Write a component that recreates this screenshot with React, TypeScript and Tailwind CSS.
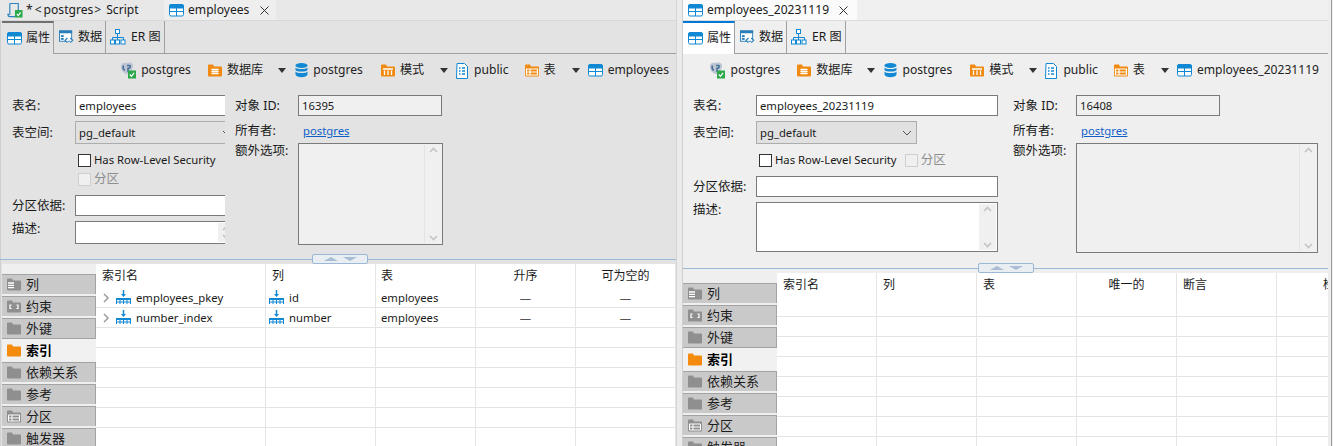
import React from "react";

const TableIcon = () => (
  <svg width="15" height="13" viewBox="0 0 15 13" className="shrink-0">
    <rect x="0.5" y="0.5" width="14" height="11.5" rx="1.5" fill="#fff" stroke="#1088d4" />
    <rect x="0.5" y="0.5" width="14" height="4" rx="1" fill="#1088d4" />
    <path d="M7.5 4v8M0.5 7.5h14" stroke="#1088d4" />
  </svg>
);

const DataIcon = () => (
  <svg width="15" height="15" viewBox="0 0 16 15" className="shrink-0">
    <rect x="0.5" y="0.5" width="13" height="11" fill="#fff" stroke="#2a7fb8" />
    <rect x="0" y="0" width="14" height="3" fill="#2a7fb8" />
    <rect x="2" y="5" width="3" height="2" fill="#2a7fb8" />
    <rect x="2" y="8" width="3" height="2" fill="#2a7fb8" />
    <path d="M9 8l-2.5 2.500L9 13M12 8l2.500 2.500L12 13" fill="#fff" stroke="#2a7fb8" strokeWidth="1.300" />
  </svg>
);

const ErIcon = () => (
  <svg width="16" height="16" viewBox="0 0 16 16" className="shrink-0">
    <rect x="5.500" y="0.500" width="4" height="4" fill="#fff" stroke="#1088d4" />
    <path d="M7.500 5v3M2.500 11V8.500h11V11M7.500 8.500V11" fill="none" stroke="#1088d4" />
    <rect x="0.500" y="11" width="4" height="4" fill="#fff" stroke="#1088d4" />
    <rect x="5.500" y="11" width="4" height="4" fill="#fff" stroke="#1088d4" />
    <rect x="11" y="11" width="4" height="4" fill="#fff" stroke="#1088d4" />
  </svg>
);

const ScriptIcon = () => (
  <svg width="16" height="17" viewBox="0 0 17 17" className="shrink-0">
    <path d="M3 1h9v11M3 1v11.500H1c0 2 1 2.500 2 2.500h6" fill="none" stroke="#2a83bd" strokeWidth="1.200" />
    <rect x="8.500" y="8" width="8" height="8" fill="#2ba84a" />
    <path d="M10.500 12l1.500 1.800 2.500-3.300" fill="none" stroke="#fff" strokeWidth="1.200" />
  </svg>
);

const PgIcon = () => (
  <svg width="16" height="17" viewBox="0 0 16 17" className="shrink-0">
    <path d="M1 4c0-3 3-3.500 5-3 2-1 6-1 7 1.500 .5 2-.5 4-1.500 5.500L10 12H6L3 10C1.500 8.500 1 6 1 4z" fill="#bcc5d1" />
    <path d="M3.500 3.500c-.8 1.800 0 4 1.200 5M7 3.500h2.500c1.500 0 1 3-1.500 2.800V10" fill="none" stroke="#46709c" strokeWidth="1.500" />
    <rect x="8" y="8.500" width="8" height="8" fill="#2ba84a" />
    <path d="M9.800 12.500l1.700 1.800 2.600-3.400" fill="none" stroke="#fff" strokeWidth="1.200" />
  </svg>
);

const CloseX = ({ className }: { className: string }) => (
  <svg width="9" height="9" viewBox="0 0 9 9" className={`shrink-0 ${className}`}>
    <path d="M.5 .5l8 8M8.500 .5l-8 8" stroke="#333" />
  </svg>
);

type Glyph = "plain" | "lines" | "bracket" | "table" | "db" | "grid" | "list";

const Folder = ({ color, glyph = "plain" }: { color: string; glyph?: Glyph }) => (
  <svg width="14" height="13" viewBox="0 0 14 12" className="shrink-0">
    <path d="M0 1a1 1 0 0 1 1-1h4l1 2h7a1 1 0 0 1 1 1v8a1 1 0 0 1-1 1H1a1 1 0 0 1-1-1z" fill={color} />
    {glyph === "lines" && <path d="M1 4.500h6M1 6.800h6M1 9.100h6" stroke="#fff" strokeWidth="1.300" />}
    {glyph === "bracket" && (
      <path d="M4.500 4.500H3v3.500h1.500M9.500 4.500H11v3.500H9.500" fill="none" stroke="#fff" strokeWidth="1.200" />
    )}
    {glyph === "table" && <path d="M1.500 4.500h11v6h-11zM1.500 7.500h11M5 4.500v6" fill="none" stroke="#fff" />}
    {glyph === "db" && (
      <path d="M4 5h6M4 7h6M4 9h6" stroke="#fff" strokeWidth="1.500" strokeLinecap="round" />
    )}
    {glyph === "grid" && <path d="M2 4.500h10M3.500 6v4.500M7 6v4.500M10.500 6v4.500" fill="none" stroke="#fff" strokeWidth="1.300" />}
    {glyph === "list" && <path d="M1.500 4.500h11v6h-11zM1.500 7.500h11M5 4.500v6" fill="none" stroke="#fff" strokeWidth="1.200" />}
  </svg>
);

const DbIcon = () => (
  <svg width="13" height="15" viewBox="0 0 13 15" className="shrink-0">
    <ellipse cx="6.500" cy="2.500" rx="6" ry="2.500" fill="#1088d4" />
    <path d="M0.500 4.500c1 2 11 2 12 0v2.500c-1 2-11 2-12 0z" fill="#1088d4" />
    <path d="M0.500 8.500c1 2 11 2 12 0v3c-1 3.500-11 3.500-12 0z" fill="#1088d4" />
  </svg>
);

const DocIcon = () => (
  <svg width="12" height="16" viewBox="0 0 12 16" className="shrink-0">
    <path d="M1 .5h7.500L11.500 3.500V15.500H.5z" fill="#fff" stroke="#1088d4" />
    <path d="M3 5h1.500M6 5h3M3 8h1.500M6 8h3M3 11h1.500M6 11h3" stroke="#1088d4" strokeWidth="1.300" />
  </svg>
);

const IndexIcon = () => (
  <svg width="15" height="15" viewBox="0 0 15 15" className="shrink-0">
    <path d="M7.500 0v5" stroke="#1088d4" strokeWidth="1.500" />
    <path d="M5 4h5L7.500 7z" fill="#1088d4" />
    <path d="M0 8h15v2H0z" fill="#1088d4" />
    <path d="M.5 10v4M4 10v4M7.500 10v4M11 10v4M14.500 10v4M0 12h15" stroke="#1088d4" />
  </svg>
);

const Caret = ({ className }: { className: string }) => (
  <span className={`h-0 w-0 border-x-[4.500px] border-t-[5px] border-x-transparent border-t-[#333] ${className}`} />
);

const Crumb = ({ icon, text, className }: { icon: React.ReactNode; text: string; className: string }) => (
  <div className={`flex items-center ${className}`}>
    {icon}
    <span>{text}</span>
  </div>
);

const Breadcrumb = ({ name, className }: { name: string; className: string }) => (
  <div className={`flex h-[33px] items-center justify-end text-[12.100px] text-[#222] ${className}`}>
    <Crumb icon={<PgIcon />} text="postgres" className="mr-[17px] gap-[5px]" />
    <Crumb icon={<Folder color="#f18a12" glyph="db" />} text="数据库" className="gap-[5px]" />
    <Caret className="ml-[15px] mr-[9px]" />
    <Crumb icon={<DbIcon />} text="postgres" className="mr-[18px] gap-[5px]" />
    <Crumb icon={<Folder color="#f18a12" glyph="grid" />} text="模式" className="gap-[5px]" />
    <Caret className="ml-[16px] mr-[8px]" />
    <Crumb icon={<DocIcon />} text="public" className="mr-[16px] gap-[6px]" />
    <Crumb icon={<Folder color="#f18a12" glyph="list" />} text="表" className="gap-[5px]" />
    <Caret className="ml-[16px] mr-[8px]" />
    <Crumb icon={<TableIcon />} text={name} className="gap-[5px]" />
  </div>
);

const Scrollbar = ({ className }: { className: string }) => (
  <div className={`flex flex-col items-center justify-between py-[2px] ${className}`}>
    <svg width="9" height="6" viewBox="0 0 9 6"><path d="M1 5l3.500-3.500L8 5" fill="none" stroke="#c4c4c4" strokeWidth="1.600" /></svg>
    <svg width="9" height="6" viewBox="0 0 9 6"><path d="M1 1l3.500 3.500L8 1" fill="none" stroke="#c4c4c4" strokeWidth="1.600" /></svg>
  </div>
);

const SubTabs = ({ activeClass, stripClass }: { activeClass: string; stripClass: string }) => (
  <div className={`flex h-[33px] text-[12.100px] ${stripClass}`}>
    <div className={`flex w-[52px] items-center gap-[4px] border-r border-[#a0a0a0] pl-[5px] ${activeClass}`}>
      <TableIcon />
      <span>属性</span>
    </div>
    <div className="flex w-[52px] items-center gap-[4px] border-r border-b border-[#a0a0a0] pl-[5px]">
      <DataIcon />
      <span>数据</span>
    </div>
    <div className="flex w-[59px] items-center gap-[5px] border-r border-b border-[#a0a0a0] pl-[4px]">
      <ErIcon />
      <span>ER 图</span>
    </div>
    <div className="flex-1 border-b border-[#a0a0a0]" />
  </div>
);

const Label = ({ children, className = "" }: { children: React.ReactNode; className?: string }) => (
  <span className={`w-[63px] shrink-0 text-[12.500px] leading-[20px] ${className}`}>{children}</span>
);

const Check = ({ disabled, label, latin }: { disabled?: boolean; label: string; latin?: boolean }) => (
  <div className="flex h-[14px] items-center gap-[3px]">
    <span className={`h-[13px] w-[13px] shrink-0 border ${disabled ? "border-[#cfcfcf] bg-[#f0f0f0]" : "border-[#333] bg-white"}`} />
    <span className={`whitespace-nowrap ${disabled ? "text-[#8e8e8e]" : ""} ${latin ? "text-[11.300px]" : "text-[12.500px]"}`}>{label}</span>
  </div>
);

const Form = ({ wide, objectId, tableName }: { wide: boolean; objectId: string; tableName: string }) => (
  <div className={`flex pt-[8px] ${wide ? "h-[181px]" : "h-[172px]"}`}>
    <div className={`flex shrink-0 flex-col overflow-hidden ${wide ? "w-[315px] pl-[10px]" : "w-[225px] pl-[12px]"}`}>
      <div className="flex h-[21px] items-center">
        <Label>表名:</Label>
        <div className={`flex h-[21px] shrink-0 items-center border border-[#7a7a7a] bg-white pl-[3px] pt-[1px] text-[11.300px] ${wide ? "w-[242px]" : "w-[200px]"}`}>{tableName}</div>
      </div>
      <div className="mt-[5px] flex h-[23px] items-center">
        <Label>表空间:</Label>
        <div className={`flex h-[23px] shrink-0 items-center justify-between border border-[#adadad] bg-[#e1e1e1] pl-[3px] pt-[1px] text-[11.300px] ${wide ? "w-[161px] pr-[4px]" : "w-[165px] pr-[7px]"}`}>
          <span>pg_default</span>
          <svg width="10" height="6" viewBox="0 0 10 6"><path d="M1 1l4 4 4-4" fill="none" stroke="#555" /></svg>
        </div>
      </div>
      {wide ? (
        <div className="ml-[66px] mt-[9px] flex gap-[8px]">
          <Check latin label="Has Row-Level Security" />
          <Check disabled label="分区" />
        </div>
      ) : (
        <>
          <div className="ml-[66px] mt-[9px]">
            <Check latin label="Has Row-Level Security" />
          </div>
          <div className="ml-[66px] mt-[5px]">
            <Check disabled label="分区" />
          </div>
        </>
      )}
      <div className="mt-[9px] flex h-[21px] items-center">
        <Label>分区依据:</Label>
        <div className={`h-[21px] shrink-0 border border-[#7a7a7a] bg-white ${wide ? "w-[242px]" : "w-[200px]"}`} />
      </div>
      <div className="mt-[5px] flex items-start">
        <Label className="-mt-[2px]">描述:</Label>
        <div className={`flex shrink-0 justify-end border border-[#7a7a7a] bg-white p-[1px] ${wide ? "h-[50px] w-[242px]" : "h-[23px] w-[162px]"}`}>
          <Scrollbar className="w-[17px] bg-[#f0f0f0]" />
        </div>
      </div>
    </div>
    <div className={`flex flex-col ${wide ? "pl-[15px]" : "pl-[10px]"}`}>
      <div className="flex h-[21px] items-center">
        <Label>对象 ID:</Label>
        <div className="flex h-[21px] w-[144px] items-center border border-[#7a7a7a] bg-[#f0f0f0] pl-[3px] pt-[1px] text-[11.300px]">{objectId}</div>
      </div>
      <div className="mt-[5px] flex h-[18px] items-center pt-[1px]">
        <Label>所有者:</Label>
        <span className="ml-[5px] text-[11.300px] text-[#0f5fc7] underline">postgres</span>
      </div>
      <div className="mt-[4px] flex items-start">
        <Label className="-mt-[2px]">额外选项:</Label>
        <div className={`flex justify-end border border-[#7a7a7a] bg-[#f0f0f0] p-[1px] ${wide ? "h-[110px] w-[242px]" : "h-[102px] w-[145px]"}`}>
          <Scrollbar className="w-[17px] border-l border-[#e4e4e4] bg-[#f0f0f0]" />
        </div>
      </div>
    </div>
  </div>
);

const Grip = ({ className }: { className: string }) => (
  <div className={`absolute top-[-5px] flex h-[10px] w-[56px] items-center justify-center gap-[5px] rounded-[2px] border border-[#9bb8d6] bg-[#e9eef3] ${className}`}>
    <span className="h-0 w-0 border-x-[7px] border-b-[4px] border-x-transparent border-b-[#a9bdd4]" />
    <span className="h-0 w-0 border-x-[7px] border-t-[4px] border-x-transparent border-t-[#a9bdd4]" />
  </div>
);

const sideItems: { label: string; glyph: Glyph; active?: boolean }[] = [
  { label: "列", glyph: "lines" },
  { label: "约束", glyph: "bracket" },
  { label: "外键", glyph: "plain" },
  { label: "索引", glyph: "plain", active: true },
  { label: "依赖关系", glyph: "plain" },
  { label: "参考", glyph: "plain" },
  { label: "分区", glyph: "table" },
  { label: "触发器", glyph: "plain" },
];

const Sidebar = () => (
  <div className="flex w-[94px] shrink-0 flex-col bg-[#efefef] pt-[10px] text-[13px]">
    {sideItems.map((it) =>
      it.active ? (
        <div key={it.label} className="-mt-[2px] mb-[1px] flex h-[23px] shrink-0 items-center gap-[5px] border-t border-[#a3a3a3] bg-[#f1f1f1] pl-[5px] font-bold text-black">
          <Folder color="#f48a0e" />
          <span>{it.label}</span>
        </div>
      ) : (
        <div key={it.label} className="mb-[2px] flex h-[20px] shrink-0 items-center gap-[5px] border-t border-r border-[#a3a3a3] bg-[#c9c9c9] pl-[5px] text-[#1c1c1c]">
          <Folder color="#8f8f8f" glyph={it.glyph} />
          <span>{it.label}</span>
        </div>
      )
    )}
  </div>
);

const Cell = ({ w, className = "", children }: { w: string; className?: string; children?: React.ReactNode }) => (
  <div className={`flex h-full shrink-0 items-center border-r border-[#e4e4e4] ${w} ${className}`}>{children}</div>
);

const Chevron = () => (
  <svg width="7" height="10" viewBox="0 0 7 10" className="ml-[7px] mr-[6px] shrink-0"><path d="M1 1l4 4-4 4" fill="none" stroke="#9a9a9a" strokeWidth="1.500" /></svg>
);

const Dash = () => <span className="w-full text-center text-[#555]">—</span>;

const LeftTable = () => {
  const rows = [
    ["employees_pkey", "id"],
    ["number_index", "number"],
  ];
  return (
    <div className="flex-1 bg-white">
      <div className="flex h-[24px]">
        <Cell w="w-[170px]" className="pl-[6px]">索引名</Cell>
        <Cell w="w-[110px]" className="pl-[6px]">列</Cell>
        <Cell w="w-[100px]" className="pl-[5px]">表</Cell>
        <Cell w="w-[100px]" className="justify-center">升序</Cell>
        <Cell w="w-[100px]" className="justify-center">可为空的</Cell>
      </div>
      {rows.map((r) => (
        <div key={r[0]} className="flex h-[20px] border-b border-[#e4e4e4] text-[11.300px]">
          <Cell w="w-[170px]">
            <Chevron />
            <IndexIcon />
            <span className="ml-[5px]">{r[0]}</span>
          </Cell>
          <Cell w="w-[110px]" className="pl-[3px]">
            <IndexIcon />
            <span className="ml-[5px]">{r[1]}</span>
          </Cell>
          <Cell w="w-[100px]" className="pl-[5px]">employees</Cell>
          <Cell w="w-[100px]"><Dash /></Cell>
          <Cell w="w-[100px]"><Dash /></Cell>
        </div>
      ))}
      {[0, 1, 2, 3, 4, 5].map((i) => (
        <div key={i} className="flex h-[20px] border-b border-[#e4e4e4]">
          <Cell w="w-[170px]" />
          <Cell w="w-[110px]" />
          <Cell w="w-[100px]" />
          <Cell w="w-[100px]" />
          <Cell w="w-[100px]" />
        </div>
      ))}
    </div>
  );
};

const RightTable = () => (
  <div className="flex-1 overflow-hidden bg-white">
    <div className="flex h-[24px]">
      <Cell w="w-[100px]" className="pl-[6px]">索引名</Cell>
      <Cell w="w-[100px]" className="pl-[6px]">列</Cell>
      <Cell w="w-[100px]" className="pl-[6px]">表</Cell>
      <Cell w="w-[100px]" className="justify-center">唯一的</Cell>
      <Cell w="w-[100px]" className="pl-[6px]">断言</Cell>
      <Cell w="w-[100px]" className="pl-[46px]">检查</Cell>
    </div>
    {[0, 1, 2, 3, 4, 5, 6, 7].map((i) => (
      <div key={i} className="flex h-[20px] border-b border-[#e4e4e4]">
        <Cell w="w-[100px]" />
        <Cell w="w-[100px]" />
        <Cell w="w-[100px]" />
        <Cell w="w-[100px]" />
        <Cell w="w-[100px]" />
      </div>
    ))}
  </div>
);

export default function App() {
  return (
    <div className="flex h-[446px] w-[1333px] overflow-hidden bg-[#ebebeb] text-[12px] leading-none text-[#1a1a1a] [font-family:'Noto_Sans','Noto_Sans_CJK_SC',sans-serif]">
      {/* left pane */}
      <div className="flex w-[677px] shrink-0 flex-col border-r border-[#d6d6d6] bg-[#e3e3e3] shadow-[inset_1px_0_0_#cfcfcf]">
        <div className="flex h-[21px] border-b border-[#d8d8d8] bg-[#e8e8e8] text-[12.100px]">
          <div className="flex w-[164px] items-center pl-[7px]">
            <ScriptIcon />
            <span className="ml-[3px] whitespace-nowrap">
              <span className="tracking-[2px]">*&lt;</span>postgres<span className="ml-[1px]">&gt;</span>
              <span className="ml-[5px]">Script</span>
            </span>
          </div>
          <div className="flex w-[112px] items-center gap-[4px] bg-[#eeeeee] pl-[5px]">
            <TableIcon />
            <span>employees</span>
            <CloseX className="ml-[7px]" />
          </div>
        </div>
        <SubTabs activeClass="border-t-2 border-t-[#707070]" stripClass="pl-[2px]" />
        <Breadcrumb name="employees" className="pr-[7px]" />
        <Form wide={false} objectId="16395" tableName="employees" />
        <div className="relative h-[1px] shrink-0 bg-[#9bb8d6]">
          <Grip className="left-[312px]" />
        </div>
        <div className="h-[4px] shrink-0" />
        <div className="flex min-h-0 flex-1 pl-[2px]">
          <Sidebar />
          <LeftTable />
        </div>
      </div>
      <div className="w-[5px] shrink-0" />
      {/* right pane */}
      <div className="flex w-[646px] shrink-0 flex-col border-l border-[#cfcfcf] bg-[#efefef]">
        <div className="flex h-[21px] border-b border-[#dcdcdc] bg-[#f0f0f0] text-[12.100px]">
          <div className="flex w-[174px] items-center gap-[4px] bg-[#fbfbfb] pl-[5px]">
            <TableIcon />
            <span>employees_20231119</span>
            <CloseX className="ml-[6px]" />
          </div>
        </div>
        <SubTabs activeClass="border-t-2 border-t-[#0078d4] bg-white" stripClass="" />
        <Breadcrumb name="employees_20231119" className="pr-[9px]" />
        <Form wide objectId="16408" tableName="employees_20231119" />
        <div className="relative h-[1px] shrink-0 bg-[#9bb8d6]">
          <Grip className="left-[295px]" />
        </div>
        <div className="h-[4px] shrink-0" />
        <div className="flex min-h-0 flex-1">
          <Sidebar />
          <RightTable />
        </div>
      </div>
      <div className="flex-1 border-l-2 border-[#ededed] bg-[#efefef]">
        <div className="ml-[1px] h-full w-[1px] bg-[#9a9a9a]" />
      </div>
    </div>
  );
}
